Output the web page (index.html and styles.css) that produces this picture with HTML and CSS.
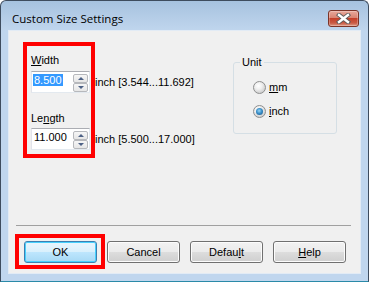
FILE: index.html
```html
<!DOCTYPE html>
<html>
<head>
<meta charset="utf-8">
<link rel="stylesheet" href="styles.css">
</head>
<body>
<div class="window">
  <div class="titlebar">
    <span class="title">Custom Size Settings</span>
    <div class="close">
      <svg width="17" height="11" viewBox="0 0 17 11">
        <path d="M4 2 L13 9 M13 2 L4 9" stroke="#5a5a5a" stroke-width="4.2" stroke-linecap="square"/>
        <path d="M4 2 L13 9 M13 2 L4 9" stroke="#ffffff" stroke-width="2.4" stroke-linecap="square"/>
      </svg>
    </div>
  </div>
  <div class="client">
    <div class="top">
      <div class="fields">
        <div class="label label-first"><u>W</u>idth</div>
        <div class="field-row">
          <div class="spinbox">
            <span class="value"><span class="sel">8.500</span></span>
            <div class="spin">
              <div class="spin-btn"><span class="tri-up"></span></div>
              <div class="spin-btn"><span class="tri-down"></span></div>
            </div>
          </div>
          <span class="range">inch [3.544...11.692]</span>
        </div>
        <div class="label label-second">Le<u>n</u>gth</div>
        <div class="field-row">
          <div class="spinbox">
            <span class="value">11.000</span>
            <div class="spin">
              <div class="spin-btn"><span class="tri-up"></span></div>
              <div class="spin-btn"><span class="tri-down"></span></div>
            </div>
          </div>
          <span class="range">inch [5.500...17.000]</span>
        </div>
      </div>
      <fieldset class="group">
        <legend>Unit</legend>
        <div class="radio-row"><span class="radio"></span><span><u>m</u>m</span></div>
        <div class="radio-row"><span class="radio checked"></span><span><u>i</u>nch</span></div>
      </fieldset>
    </div>
    <div class="spacer"></div>
    <div class="separator"></div>
    <div class="buttons">
      <div class="btn default">OK</div>
      <div class="btn">Cancel</div>
      <div class="btn">Defau<u>l</u>t</div>
      <div class="btn"><u>H</u>elp</div>
    </div>
  </div>
  <div class="mark mark-fields"></div>
  <div class="mark mark-ok"></div>
</div>
</body>
</html>
```
FILE: styles.css
```css
html, body {
  margin: 0;
  padding: 0;
  background: #ffffff;
}

.window {
  position: relative;
  width: 369px;
  height: 282px;
  box-sizing: border-box;
  border: 1px solid #3e4c5e;
  border-bottom-color: #2a8aa8;
  border-radius: 6px 6px 0 0;
  padding: 0 7px 7px 7px;
  display: flex;
  flex-direction: column;
  background: linear-gradient(#a6c2df 0px, #b6cee8 18px, #c0d6ee 30px, #c0d6ee 100%);
  font-family: "Liberation Sans", Arial, sans-serif;
  font-size: 11px;
  color: #000;
}

.titlebar {
  height: 29px;
  display: flex;
  align-items: flex-start;
  position: relative;
}

.title {
  font-family: "Open Sans", "Noto Sans", sans-serif;
  font-size: 11.5px;
  line-height: 16px;
  margin-top: 10px;
  margin-left: 4px;
  color: #000;
}

.close {
  margin-left: auto;
  margin-top: 9px;
  margin-right: 2px;
  width: 31px;
  height: 17px;
  box-sizing: border-box;
  border: 1px solid #7b3428;
  border-radius: 3px;
  background: linear-gradient(#e8a99c 0%, #d98472 45%, #c5402a 50%, #c95a44 80%, #df9a86 100%);
  display: flex;
  align-items: center;
  justify-content: center;
  box-shadow: inset 0 0 0 1px rgba(255,255,255,0.25);
}

.client {
  flex: 1;
  background: #f0f0f0;
  border: 1px solid #e2ebf5;
  display: flex;
  flex-direction: column;
}

.top {
  display: flex;
  align-items: flex-start;
}

.fields {
  margin-left: 22px;
  width: 180px;
}

.label {
  line-height: 13px;
  height: 13px;
}

.label-first {
  margin-top: 23px;
  margin-bottom: 4px;
}

.label-second {
  margin-top: 19px;
  margin-bottom: 3px;
}

.field-row {
  display: flex;
  align-items: center;
  height: 22px;
}

.spinbox {
  width: 59px;
  height: 22px;
  box-sizing: border-box;
  border: 1px solid #e3e9ef;
  border-top-color: #abadb3;
  border-left-color: #e2e3ea;
  background: #ffffff;
  display: flex;
  align-items: flex-start;
  padding: 1px 0 0 1px;
}

.value {
  flex: 1;
  font-size: 11px;
  line-height: 13px;
  margin-top: 1px;
  padding-left: 1px;
}

.sel {
  background: #3399ff;
  color: #ffffff;
  padding: 0 1px;
  margin-left: -1px;
}

.spin {
  width: 15px;
  display: flex;
  flex-direction: column;
  margin-top: 1px;
  margin-right: 1px;
}

.spin-btn {
  height: 9px;
  box-sizing: border-box;
  border: 1px solid #b6b8bc;
  border-radius: 2px;
  background: linear-gradient(#f6f6f6, #e6e6e6);
  display: flex;
  align-items: center;
  justify-content: center;
}

.tri-up {
  width: 0;
  height: 0;
  border-left: 3px solid transparent;
  border-right: 3px solid transparent;
  border-bottom: 3px solid #4d6185;
}

.tri-down {
  width: 0;
  height: 0;
  border-left: 3px solid transparent;
  border-right: 3px solid transparent;
  border-top: 3px solid #4d6185;
}

.range {
  margin-left: 5px;
  line-height: 13px;
  white-space: nowrap;
}

.group {
  margin: 25px 0 0 22px;
  padding: 0 6px 0 6px;
  width: 104px;
  height: 78px;
  box-sizing: border-box;
  border: 1px solid #d5dfe5;
  border-radius: 3px;
  min-width: 0;
}

.group legend {
  padding: 0 2px;
  line-height: 12px;
  font-size: 11px;
}

.radio-row {
  display: flex;
  align-items: center;
  height: 13px;
  margin-left: 13px;
  line-height: 13px;
  gap: 3px;
}

.radio-row:first-of-type {
  margin-top: 13px;
}

.radio-row + .radio-row {
  margin-top: 11px;
}

.radio {
  width: 13px;
  height: 13px;
  box-sizing: border-box;
  border-radius: 50%;
  border: 1px solid #8e8f8f;
  background: radial-gradient(circle at 40% 35%, #ffffff 0%, #f0f0f0 35%, #cfcfcf 75%, #e4e4e4 100%);
  position: relative;
}

.radio.checked::after {
  content: "";
  position: absolute;
  left: 2px;
  top: 2px;
  width: 7px;
  height: 7px;
  border-radius: 50%;
  background: radial-gradient(circle at 45% 40%, #9ad7f5 0%, #3a8fc9 45%, #174f7f 100%);
}

.spacer {
  flex: 1;
}

.separator {
  height: 1px;
  background: #a0a0a0;
  margin: 0 9px 0 7px;
}

.buttons {
  display: flex;
  gap: 10px;
  padding-left: 15px;
  margin-top: 15px;
  margin-bottom: 10px;
}

.btn {
  width: 73px;
  height: 22px;
  box-sizing: border-box;
  border: 1px solid #707070;
  border-radius: 3px;
  background: linear-gradient(#f2f2f2 0%, #ebebeb 50%, #dddddd 50%, #cfcfcf 100%);
  box-shadow: inset 0 0 0 1px #fcfcfc;
  display: flex;
  align-items: center;
  justify-content: center;
  line-height: 13px;
}

.btn.default {
  border-color: #3c7fb1;
  background: linear-gradient(#eaf6fd 0%, #d9f0fc 50%, #bee6fd 50%, #a7d9f5 100%);
  box-shadow: inset 0 0 0 1px #48d1fd;
}

.mark {
  position: absolute;
  border: 4px solid #ff0000;
  box-sizing: border-box;
}

.mark-fields {
  left: 22px;
  top: 41px;
  width: 72px;
  height: 116px;
}

.mark-ok {
  left: 14px;
  top: 233px;
  width: 90px;
  height: 35px;
}
```
